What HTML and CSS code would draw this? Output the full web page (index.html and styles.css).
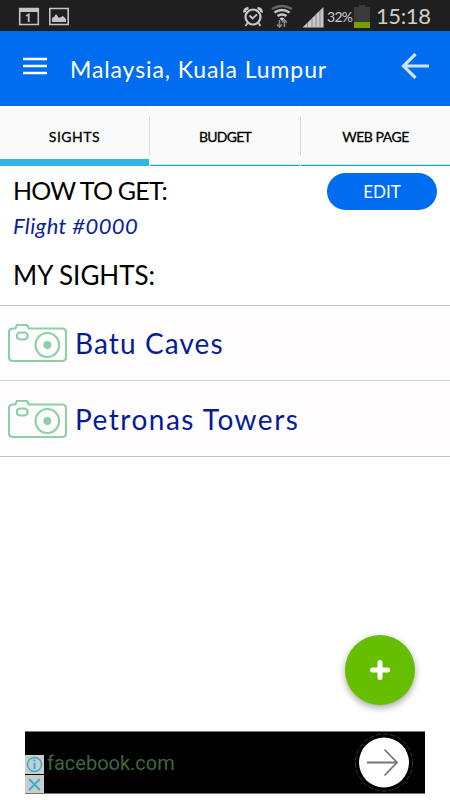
FILE: index.html
```html
<!DOCTYPE html>
<html lang="en">
<head>
<meta charset="utf-8">
<title>Malaysia, Kuala Lumpur</title>
<link rel="stylesheet" href="styles.css">
</head>
<body>
<div class="status">
  <svg class="notices" width="52" height="20" viewBox="0 0 52 20" fill="none" stroke="#c4c4c4">
    <path d="M1.700 1.500h18.600v16H1.700z" stroke-width="1.600"/><path d="M1 3h20" stroke-width="4"/>
    <path d="M8.300 9l2.400-1.500V15" stroke-width="1.800"/>
    <path d="M31.800 1.500h18.400v16H31.800z" stroke-width="1.600"/>
    <path d="M34 15v-4l2-1 2-3 3 4 2-1 2-1 3 3v3z" fill="#c4c4c4" stroke="none"/>
  </svg>
  <svg class="signals" width="82" height="26" viewBox="0 0 82 26" fill="none" stroke="#c9c9c9">
    <circle cx="11" cy="14" r="7.500" stroke-width="2.200"/><path d="M7.500 12.500l3 3 4.500-4M5.500 20l-2 3M16.500 20l2 3" stroke-width="1.800"/>
    <path d="M2.500 9.500Q2 6 6.500 5M19.500 9.500Q20 6 15.500 5" stroke-width="2.600"/>
    <path d="M30 6q10-6 20 0" stroke="#666" stroke-width="2.400"/>
    <path d="M32.500 9.500q7.500-5 15 0M35.500 13q4.500-3 9 0" stroke-width="2.600"/><path d="M37.500 15.500q2.500-2 5 0l-2.500 2.500z" fill="#c9c9c9" stroke="none"/>
    <path d="M37.500 17v7M35 21.500l2.500 2.500 2.500-2.500M42.500 24v-7M40 19.500l2.500-2.500 2.500 2.500" stroke="#888" stroke-width="1.600"/>
    <path d="M60.500 24.500L81.500 4v20.500z" fill="#c9c9c9" stroke="none"/><path d="M65.500 20v5M70 16v9M74 12v13M78 8v17" stroke="#777" stroke-width=".8"/>
  </svg>
  <span class="percent">32%</span>
  <svg class="battery" width="16" height="23" viewBox="0 0 16 23"><path d="M5 0h6v2h5v15H0V2h5z" fill="#3b3b3b"/><path d="M0 17h16v6H0z" fill="#72a100"/></svg>
  <span class="clock">15:18</span>
</div>
<header class="bar">
  <svg class="menu" width="24" height="18" viewBox="0 0 24 18"><path d="M0 2h24M0 9h24M0 16h24" stroke="#fff" stroke-width="2.500"/></svg>
  <h1>Malaysia, Kuala Lumpur</h1>
  <svg class="back" width="28" height="26" viewBox="0 0 28 26" fill="none" stroke="#cce2fd" stroke-width="3.200"><path d="M28 13H3M14.500 1L2.500 13l12 12"/></svg>
</header>
<nav class="tabs">
  <a class="tab active"><span class="t-sights">SIGHTS</span></a>
  <a class="tab"><span class="t-budget">BUDGET</span></a>
  <a class="tab"><span class="t-web">WEB PAGE</span></a>
</nav>
<main>
  <section class="travel">
    <div><h2 class="how">HOW TO GET:</h2><p class="flight">Flight #0000</p></div>
    <button class="edit">EDIT</button>
  </section>
  <h2 class="mine">MY SIGHTS:</h2>
  <ul class="sights">
    <li>
      <svg width="59" height="40" viewBox="0 0 60 40" preserveAspectRatio="none" fill="none" stroke="#8bd0a7" stroke-width="2.200"><path d="M5 5.500h2.500L9 2h10.500L21 5.500h34Q59 5.500 59 9.500V34q0 4-4 4H5q-4 0-4-4V9.500q0-4 4-4z"/><rect x="9" y="9.500" width="11" height="7" rx="3.500"/><circle cx="40" cy="22" r="12"/><circle cx="40" cy="22" r="4" fill="#8bd0a7" stroke="none"/></svg>
      <span class="batu">Batu Caves</span>
    </li>
    <li>
      <svg width="59" height="40" viewBox="0 0 60 40" preserveAspectRatio="none" fill="none" stroke="#8bd0a7" stroke-width="2.200"><path d="M5 5.500h2.500L9 2h10.500L21 5.500h34Q59 5.500 59 9.500V34q0 4-4 4H5q-4 0-4-4V9.500q0-4 4-4z"/><rect x="9" y="9.500" width="11" height="7" rx="3.500"/><circle cx="40" cy="22" r="12"/><circle cx="40" cy="22" r="4" fill="#8bd0a7" stroke="none"/></svg>
      <span class="petronas">Petronas Towers</span>
    </li>
  </ul>
</main>
<button class="fab" aria-label="Add"><svg width="20" height="20" viewBox="0 0 20 20"><path d="M10 2.500v15M2.500 10h15" stroke="#fff" stroke-width="5" stroke-linecap="round"/></svg></button>
<aside class="ad">
  <div class="choices">
    <svg width="19" height="19" viewBox="0 0 19 19" fill="none" stroke="#23b5d3"><circle cx="9.500" cy="9.500" r="7" stroke-width="1.500"/><path d="M9.500 8v6M9.500 4.500v2" stroke-width="2"/></svg>
    <svg width="19" height="19" viewBox="0 0 19 19" stroke="#35b3cc" stroke-width="2"><path d="M4 4l11 11M15 4L4 15"/></svg>
  </div>
  <span class="site">facebook.com</span>
  <svg class="go" width="60" height="60" viewBox="0 0 60 60" fill="none"><circle cx="30" cy="30.500" r="28.500" stroke="#444" stroke-width=".8" stroke-dasharray="5 2"/><circle cx="30" cy="30.500" r="25" fill="#fff"/><path d="M13 30.500h30M30.500 17.500L43 30.500 30.500 43.500" stroke="#777" stroke-width="1.800"/></svg>
</aside>
</body>
</html>
```
FILE: styles.css
```css
* { box-sizing: border-box; margin: 0; padding: 0; }
body { width: 450px; height: 800px; display: flex; flex-direction: column; overflow: hidden; background: #fff; font-family: Lato, "Open Sans", sans-serif; white-space: nowrap; }
svg { display: block; flex: none; }
h1, h2 { font-weight: 400; }
.status { height: 31px; flex: none; display: flex; background: #1f1f1f; color: #cecece; padding-left: 18px; }
.notices { margin-top: 7px; }
.signals { margin: 3px 0 0 172px; }
.percent { width: 28px; padding-left: 3px; font-size: 14px; line-height: 33px; letter-spacing: -.7px; }
.battery { margin: 5px 0 0 2px; }
.clock { margin-left: 6px; font-size: 22px; line-height: 31px; letter-spacing: -.4px; }
.bar { height: 75px; flex: none; display: flex; background: #006df0; color: #fff; padding: 0 21px 0 23px; }
.menu { margin-top: 26px; }
.bar h1 { width: 260px; margin-left: 23px; font-size: 23px; line-height: 77px; letter-spacing: .9px; }
.back { margin: 22px 0 0 auto; }
.tabs { height: 60px; flex: none; display: grid; grid-template: 60px / 149px 150px 149px; gap: 1px; background: #fff; }
.tab { position: relative; background: #fafafa; border-bottom: 1px solid #1ba3d5; box-shadow: inset 0 -1px #c5e6f3; text-align: center; font-size: 14px; line-height: 61px; color: #000; -webkit-text-stroke: .3px #000; }
.tab.active { border-bottom: 7px solid #33b5e5; box-shadow: none; }
.tab + .tab::before { content: ""; position: absolute; left: -1px; top: 10px; width: 1px; height: 40px; background: #ddd; }
.t-sights { letter-spacing: .5px; }
.t-budget { letter-spacing: -.8px; }
.t-web { letter-spacing: -.5px; }
.travel { display: flex; justify-content: space-between; padding: 7px 13px 0; height: 87px; }
.how, .mine { font-size: 26px; line-height: 34px; }
.how { font-size: 25px; letter-spacing: -.8px; }
.flight { font-size: 22px; line-height: 38px; font-style: italic; letter-spacing: .4px; color: #0a1da0; }
.edit { width: 110px; height: 37px; border: 0; border-radius: 19px; background: #006df0; color: #fff; font: 17px Lato, sans-serif; }
.mine { height: 52px; padding: 5px 13px 0; }
.sights { list-style: none; border-top: 1px solid #c4c4c4; }
.sights li { height: 75px; display: flex; padding: 17px 8px 0; gap: 8px; background: #fffdfe; color: #061b97; font-size: 28px; line-height: 41px; border-bottom: 1px solid #d4d4d4; }
.sights li:last-child { height: 76px; padding-top: 18px; border-color: #c4c4c4; }
.batu { letter-spacing: 1.1px; }
.petronas { letter-spacing: 1.5px; }
.fab { position: absolute; left: 345px; top: 635px; width: 70px; height: 70px; border: 0; border-radius: 50%; background: #65bf00; display: grid; place-items: center; box-shadow: 0 3px 7px rgba(0,0,0,.35); }
.ad { width: 400px; height: 63px; margin: auto 25px 6px; display: flex; background: #000; border-top: 1px solid #777; border-bottom: 1px solid #777; }
.choices { display: flex; flex-direction: column; gap: 1px; margin-top: 23px; height: 38px; overflow: hidden; }
.choices svg { background: #ccc; }
.site { margin: 17px 0 0 3px; font: 20px/28px Roboto, sans-serif; color: #3c663f; }
.go { margin: 0 11px 0 auto; }
```
